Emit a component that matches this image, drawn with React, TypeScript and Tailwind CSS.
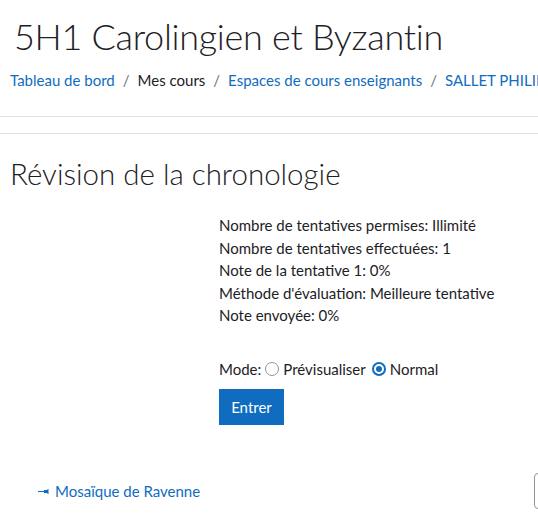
export default function App() {
  return (
    <div className="w-[538px] h-[525px] overflow-hidden bg-white text-[#1d2125] font-['Lato',sans-serif]">
      <header className="px-[10px]">
        <h1 className="pt-[12px] pl-[4px] text-[36px] leading-[48px] tracking-[-0.3px] font-light whitespace-nowrap">5H1 Carolingien et Byzantin</h1>
        <nav className="mt-[9px] flex items-center whitespace-nowrap text-[15px] leading-[22px]">
          <a className="text-[#0f6cbf]">Tableau de bord</a>
          <span className="px-[8px] text-[#6a737b]">/</span>
          <span>Mes cours</span>
          <span className="px-[8px] text-[#6a737b]">/</span>
          <a className="text-[#0f6cbf]">Espaces de cours enseignants</a>
          <span className="px-[8px] text-[#6a737b]">/</span>
          <a className="text-[#0f6cbf]">SALLET PHILIPPE</a>
        </nav>
      </header>

      <div className="mt-[25px] border-t border-[#dee2e6]" />
      <div className="mt-[16px] border-t border-[#dee2e6]" />

      <main className="px-[10px]">
        <h2 className="mt-[22px] text-[29.5px] leading-[36px] font-light">Révision de la chronologie</h2>

        <div className="ml-[209px] mt-[22px] text-[15px] leading-[22.5px]">
          <p>Nombre de tentatives permises: Illimité</p>
          <p>Nombre de tentatives effectuées: 1</p>
          <p>Note de la tentative 1: 0%</p>
          <p>Méthode d'évaluation: Meilleure tentative</p>
          <p>Note envoyée: 0%</p>

          <div className="mt-[31px] flex items-center gap-[4px]">
            <span>Mode:</span>
            <span className="w-[14px] h-[14px] rounded-full border-[1.5px] border-[#8f959e]" />
            <span>Prévisualiser</span>
            <span className="ml-[2px] w-[14px] h-[14px] rounded-full bg-[#0f6cbf] flex items-center justify-center">
              <span className="w-[10px] h-[10px] rounded-full border-[2px] border-white bg-[#0f6cbf]" />
            </span>
            <span>Normal</span>
          </div>

          <button className="mt-[9px] w-[65px] h-[36px] bg-[#0f6cbf] text-white text-[15px]">Entrer</button>
        </div>
      </main>

      <footer className="mt-[48px] flex items-center">
        <a className="ml-[38px] flex items-center gap-[6px] text-[15px] text-[#0f6cbf]">
          <svg width="11" height="7" viewBox="0 0 11 7">
            <rect x="0" y="3" width="7" height="1" fill="#0f6cbf" />
            <rect x="6" y="2" width="4" height="3" fill="#0f6cbf" />
            <rect x="9.5" y="1" width="1" height="5" fill="#0f6cbf" />
          </svg>
          Mosaïque de Ravenne
        </a>
        <div className="ml-auto mr-[-120px] w-[124px] h-[36px] rounded-[4px] border border-[#8f959e]" />
      </footer>
    </div>
  );
}
